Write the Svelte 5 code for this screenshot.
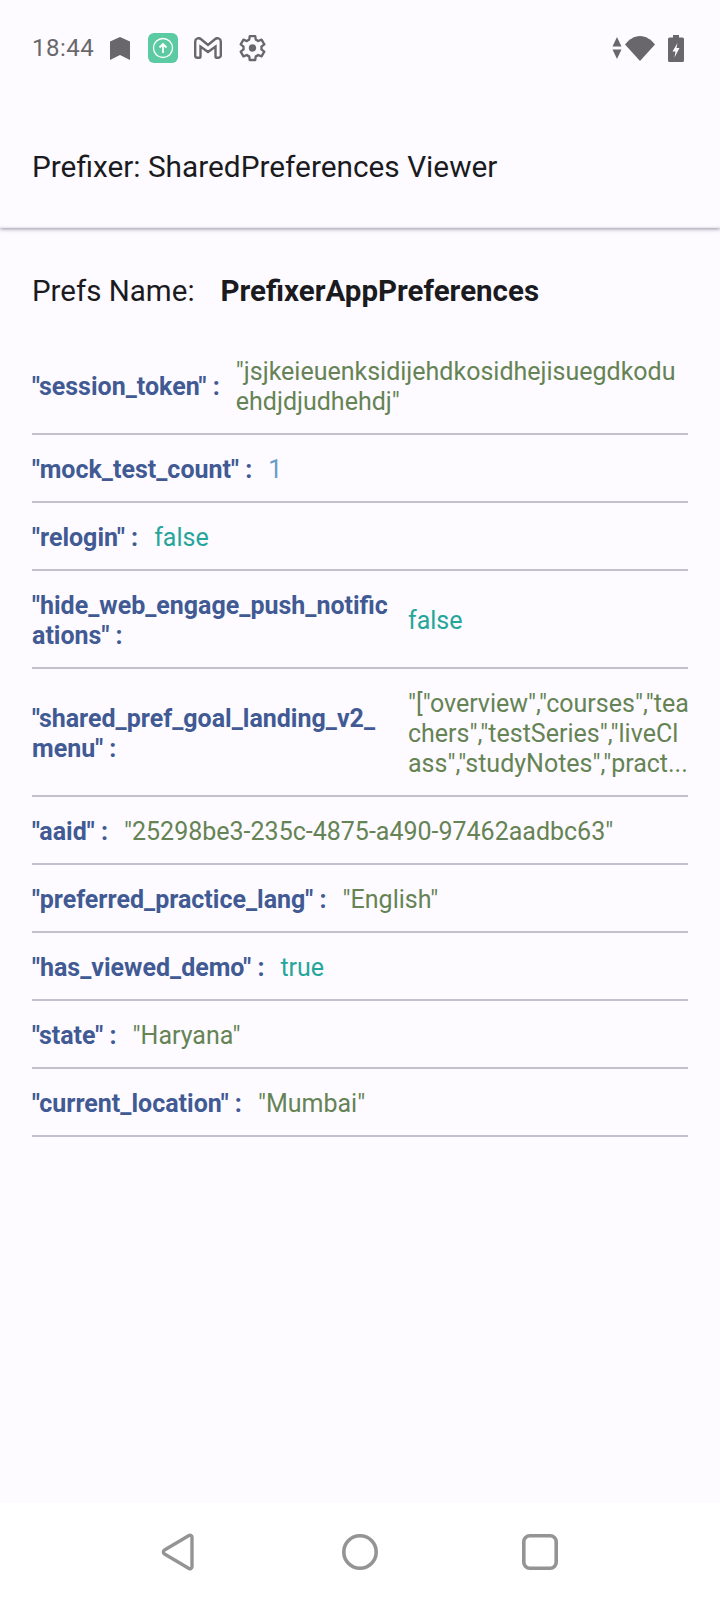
<script>
  const rows = [
    { key: '"session_token" :', lines: ['"jsjkeieuenksidijehdkosidhejisuegdkodu', 'ehdjdjudhehdj"'], kind: 'str' },
    { key: '"mock_test_count" :', lines: ['1'], kind: 'num' },
    { key: '"relogin" :', lines: ['false'], kind: 'bool' },
    { key: '"hide_web_engage_push_notific\nations" :', lines: ['false'], kind: 'bool', split: true },
    { key: '"shared_pref_goal_landing_v2_\nmenu" :', lines: ['"["overview","courses","tea', 'chers","testSeries","liveCl', 'ass","studyNotes","pract...'], kind: 'str', split: true },
    { key: '"aaid" :', lines: ['"25298be3-235c-4875-a490-97462aadbc63"'], kind: 'str' },
    { key: '"preferred_practice_lang" :', lines: ['"English"'], kind: 'str' },
    { key: '"has_viewed_demo" :', lines: ['true'], kind: 'bool' },
    { key: '"state" :', lines: ['"Haryana"'], kind: 'str' },
    { key: '"current_location" :', lines: ['"Mumbai"'], kind: 'str' }
  ];
</script>

<div class="screen">
  <div class="status">
    <span class="time">18:44</span>
    <svg class="bookmark" width="20" height="23" viewBox="0 0 20 23"><path d="M0 4.500 10 0l10 4.500V23l-10-5-10 5z" fill="#69676b"/></svg>
    <svg class="upload" width="30" height="30" viewBox="0 0 30 30">
      <rect width="30" height="30" rx="6" fill="#5ccaa2"/>
      <circle cx="15" cy="15" r="9.500" fill="none" stroke="#fff" stroke-width="1.300"/>
      <path d="M15 20v-9M11.500 14.500 15 11l3.500 3.500" fill="none" stroke="#fff" stroke-width="1.800"/>
    </svg>
    <svg class="gmail" width="28" height="22" viewBox="0 0 28 22"><path d="M3.500 20.700h2a1 1 0 0 0 1-1V9.500L14 15l7.500-5.500v10.200a1 1 0 0 0 1 1h2a2.300 2.300 0 0 0 2.300-2.300V4.500c0-3-3.400-4.200-5.600-2.500L14 8 6.800 2C4.600.3 1.200 1.500 1.200 4.500v13.900a2.300 2.300 0 0 0 2.300 2.300z" fill="none" stroke="#69676b" stroke-width="2.400"/></svg>
    <svg class="gear" width="27" height="28" viewBox="3.200 1.800 19.400 20.400"><path d="M19.400 13c.04-.33.06-.66.06-1s-.02-.67-.06-1l2.100-1.650-2-3.460-2.480 1a7.500 7.500 0 0 0-1.730-1L14.900 3.300h-4l-.38 2.640c-.63.250-1.200.6-1.730 1l-2.480-1-2 3.460L6.400 11c-.04.33-.06.66-.06 1s.02.67.06 1l-2.100 1.650 2 3.460 2.480-1c.53.4 1.100.750 1.730 1l.38 2.640h4l.38-2.640c.63-.25 1.200-.6 1.730-1l2.480 1 2-3.460z" fill="none" stroke="#69676b" stroke-width="1.700" stroke-linejoin="round"/><circle cx="12.900" cy="12" r="2.700" fill="#69676b"/></svg>
    <span class="spacer"></span>
    <svg class="arrows" width="10" height="22" viewBox="0 0 10 22"><path d="M5 0l4.500 9.500H.5zM.5 12.500h9L5 22z" fill="#69676b"/></svg>
    <svg class="wifi" width="30" height="25" viewBox="0 0 30 25"><path d="M15 25 0 8.500C4 3.500 9 0 15 0s11 3.500 15 8.500z" fill="#69676b"/></svg>
    <svg class="batt" width="16" height="27" viewBox="0 0 16 27"><path d="M5 0h6v2.500h3.500A1.500 1.500 0 0 1 16 4v21.500a1.500 1.500 0 0 1-1.500 1.500h-13A1.500 1.500 0 0 1 0 25.500V4a1.500 1.500 0 0 1 1.500-1.500H5z" fill="#69676b"/><path d="M9.500 8 4.500 16.500h3l-1 6 5-9.500h-3z" fill="#fdfbff"/></svg>
  </div>

  <header class="appbar">Prefixer: SharedPreferences Viewer</header>

  <main class="content">
    <div class="prefs">
      <span class="prefs-label">Prefs Name:</span>
      <span class="prefs-name">PrefixerAppPreferences</span>
    </div>

    {#each rows as row}
      <div class="row">
        <div class="key" class:split={row.split}>{row.key}</div>
        <div class="value {row.kind}">
          {#each row.lines as line}
            <div>{line}</div>
          {/each}
        </div>
      </div>
    {/each}
  </main>

  <nav class="navbar">
    <svg width="37" height="40" viewBox="0 0 37 40"><path d="M28 3.500a2 2 0 0 1 3 1.700v29.600a2 2 0 0 1-3 1.700L3.500 22a2.300 2.300 0 0 1 0-4z" fill="none" stroke="#949494" stroke-width="3.400" stroke-linejoin="round"/></svg>
    <svg width="36" height="36" viewBox="0 0 36 36"><circle cx="18" cy="18" r="16.200" fill="none" stroke="#949494" stroke-width="3.600"/></svg>
    <svg width="36" height="36" viewBox="0 0 36 36"><rect x="1.800" y="1.800" width="32.400" height="32.400" rx="6" fill="none" stroke="#949494" stroke-width="3.600"/></svg>
  </nav>
</div>

<style>
  :global(body) {
    margin: 0;
    background: #fdfbff;
  }
  .screen {
    width: 720px;
    height: 1600px;
    display: flex;
    flex-direction: column;
    background: #fdfbff;
    font-family: Roboto, sans-serif;
    overflow: hidden;
  }
  .status {
    height: 96px;
    padding: 0 37px 0 32px;
    box-sizing: border-box;
    display: flex;
    align-items: center;
    color: #69676b;
    flex-shrink: 0;
  }
  .time {
    font-size: 24px;
    letter-spacing: 0.5px;
  }
  .bookmark {
    margin-left: 16px;
  }
  .upload {
    margin-left: 18px;
  }
  .gmail {
    margin-left: 16px;
  }
  .gear {
    margin-left: 17px;
  }
  .spacer {
    flex: 1;
  }
  .arrows {
    margin-right: -1px;
  }
  .wifi {
    margin-left: 4px;
  }
  .batt {
    margin-left: 13px;
    margin-right: -1px;
  }
  .appbar {
    height: 132px;
    box-sizing: border-box;
    padding: 8px 32px 0;
    display: flex;
    align-items: center;
    font-size: 29.800px;
    color: #1b1b1f;
    box-shadow:
      0 1px 4px rgba(60, 58, 80, 0.55),
      inset 0 -2px 2px -1px rgba(60, 58, 80, 0.12);
    clip-path: inset(0 0 -8px 0);
    flex-shrink: 0;
  }
  .content {
    flex: 1;
    padding: 0 32px;
  }
  .prefs {
    display: flex;
    align-items: center;
    gap: 26px;
    font-size: 29.500px;
    color: #1b1b1f;
    height: 35px;
    padding: 45px 0 29px;
  }
  .prefs-name {
    font-weight: 700;
  }
  .row {
    display: flex;
    align-items: center;
    gap: 16px;
    padding: 20px 0 16px;
    border-bottom: 2px solid #c4c1cf;
    font-size: 25px;
    line-height: 30px;
  }
  .key {
    color: #415a94;
    font-weight: 700;
    white-space: pre;
    flex-shrink: 0;
  }
  .key.split {
    width: 360px;
  }
  .value {
    white-space: nowrap;
  }
  .str {
    color: #658354;
  }
  .num {
    color: #6a9cc4;
  }
  .bool {
    color: #26a69a;
  }
  .navbar {
    height: 97px;
    background: #fff;
    flex-shrink: 0;
    display: flex;
    align-items: center;
    gap: 144px;
    padding-left: 161px;
    box-sizing: border-box;
  }
</style>
